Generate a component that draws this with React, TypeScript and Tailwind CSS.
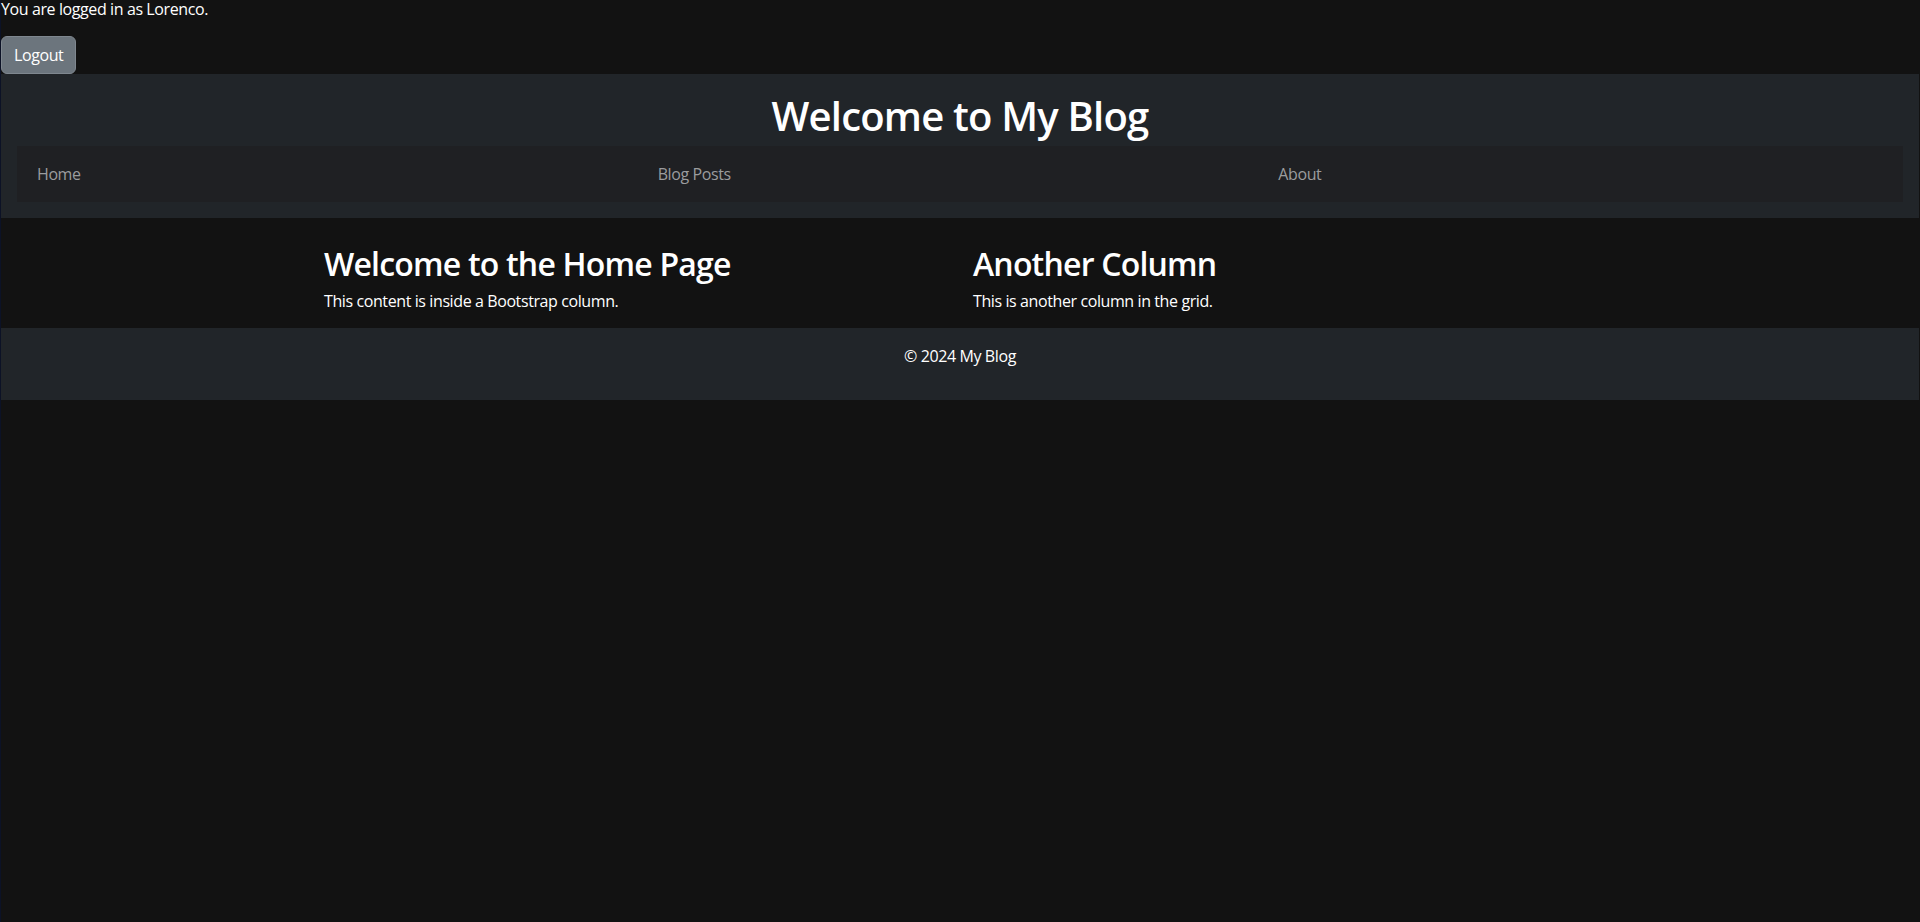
const navLinks = ['Home', 'Blog Posts', 'About'];

const App = () => {
  return (
    <div
      className="min-h-[922px] bg-[#121212] text-white tracking-[-0.4px] border-l border-l-[#0c1226] border-r border-r-[#121212]"
      style={{ fontFamily: '"Open Sans", "Noto Sans", sans-serif' }}
    >
      {/* barra de sessão */}
      <p className="text-base leading-[19px] mb-[17px]">You are logged in as Lorenco.</p>
      <button className="h-[38px] px-3 text-base text-white bg-[#6c757d] border border-[#7f878f] rounded-md">
        Logout
      </button>

      {/* cabeçalho */}
      <header className="bg-[#212529] px-4 pt-[18px] pb-4">
        <h1 className="text-center text-[40px] leading-[48px] font-semibold tracking-[-0.8px] mb-[6px]">
          Welcome to My Blog
        </h1>
        <nav className="bg-[#1f2023] px-3 py-2">
          <ul className="grid grid-cols-3">
            {navLinks.map((link) => (
              <li key={link}>
                <a href="#" className="block px-2 py-2 text-base leading-6 text-[#9b9c9e]">
                  {link}
                </a>
              </li>
            ))}
          </ul>
        </nav>
      </header>

      {/* conteúdo */}
      <main className="pt-[27px] pl-[323px]">
        <div className="grid grid-cols-[649px_649px]">
          <div>
            <h2 className="text-[32px] leading-[38px] font-semibold tracking-[-0.8px] mb-[6px]">
              Welcome to the Home Page
            </h2>
            <p className="text-base leading-6 mb-[15px]">This content is inside a Bootstrap column.</p>
          </div>
          <div>
            <h2 className="text-[32px] leading-[38px] font-semibold tracking-[-0.8px] mb-[6px]">
              Another Column
            </h2>
            <p className="text-base leading-6 mb-[15px]">This is another column in the grid.</p>
          </div>
        </div>
      </main>

      {/* rodapé */}
      <footer className="bg-[#212529] py-4 text-center">
        <p className="text-base leading-6 mb-4">© 2024 My Blog</p>
      </footer>
    </div>
  );
};

export default App;
